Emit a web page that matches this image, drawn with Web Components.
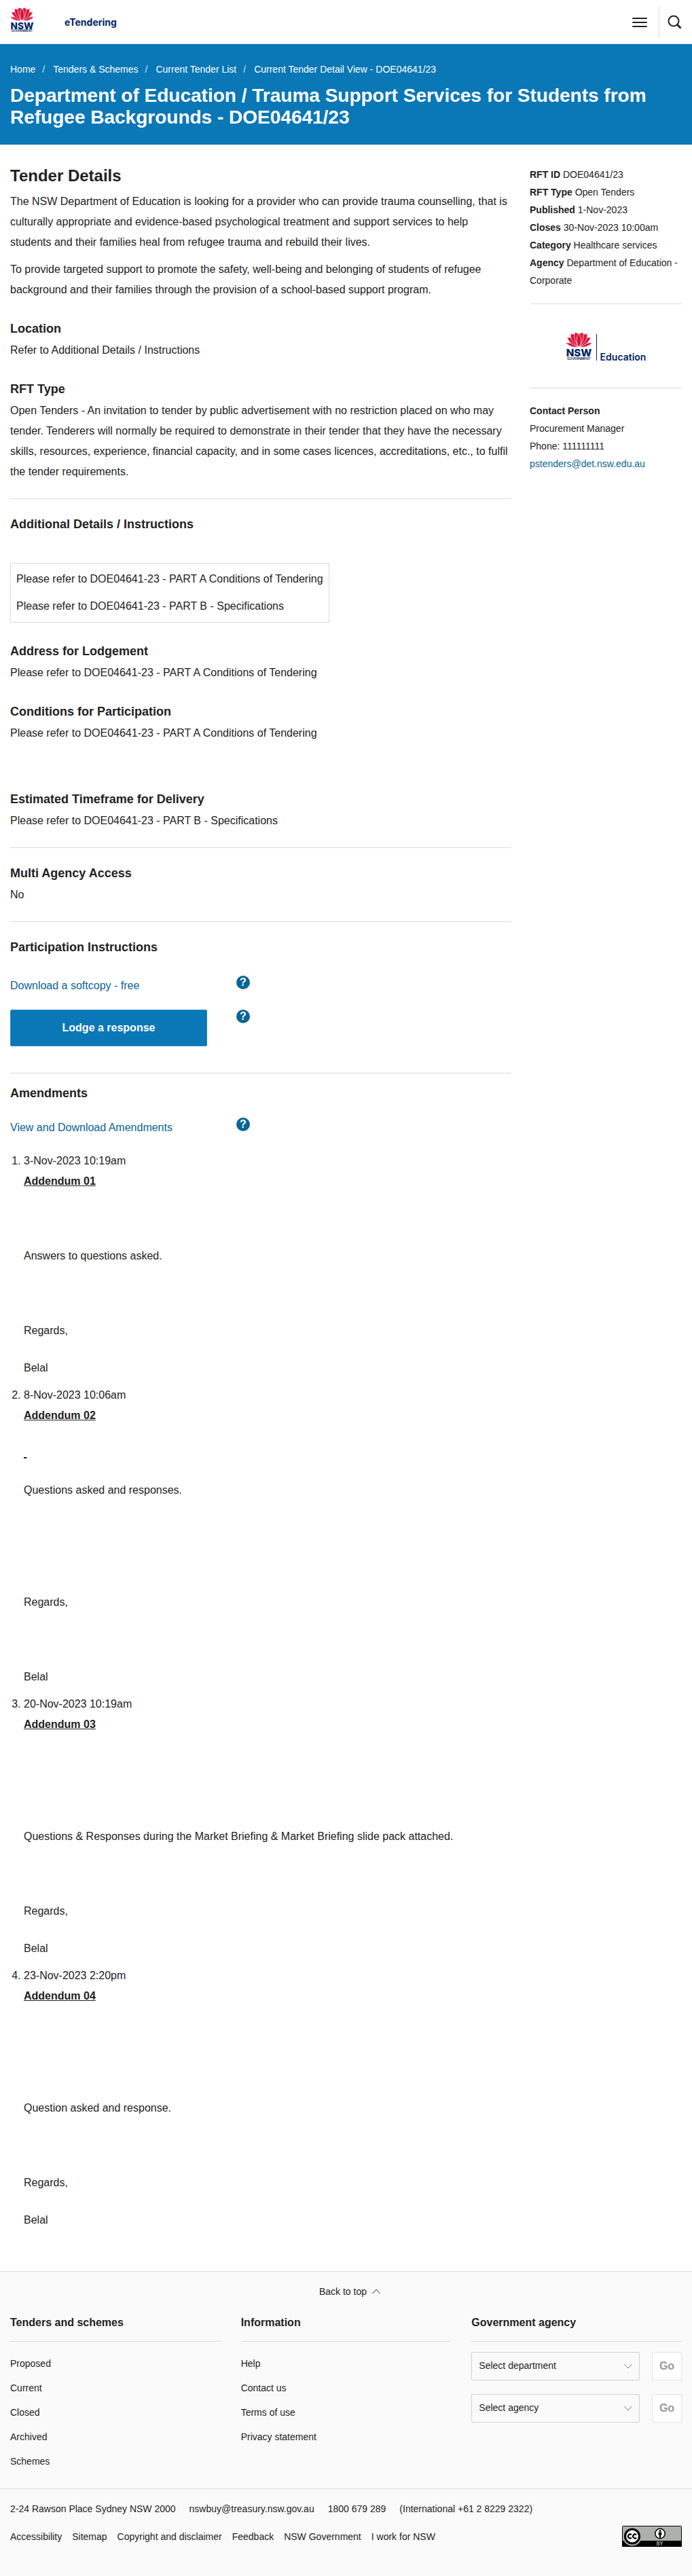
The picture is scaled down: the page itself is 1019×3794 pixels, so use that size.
<!DOCTYPE html>
<html lang="en">
<head>
<meta charset="utf-8">
<meta name="viewport" content="width=device-width, initial-scale=1">
<title>Current Tender Detail View - DOE04641/23</title>
<style>
  :root {
    --ink: #222;
    --link: #0a6496;
    --brand: #0a77b6;
    --line: #dbdbdb;
    --navy: #002664;
    --red: #d7153a;
  }
  body {
    margin: 0;
    background: #fff;
    color: var(--ink);
    font: 16px/30px "Liberation Sans", Arial, sans-serif;
  }
  main {
    display: grid;
    grid-template-columns: minmax(0, 1fr) 224px;
    gap: 28px;
    padding: 31px 15px 50px;
  }
  h2 { margin: 0 0 8px; font-size: 24px; line-height: 30px; }
  p { margin: 0 0 10px; }
  p:last-child, p:has(+ detail-block) { margin-bottom: 0; }
  a { color: var(--link); text-decoration: none; }
  hr { margin: 24px 0 25px; border: 0; border-top: 1px solid var(--line); }
  hr.wide { margin: 39px 0 17px; }
  detail-block { margin-top: 30px; }
  hr + detail-block { margin-top: 0; }
  detail-block.spaced { margin-top: 70px; }
  .boxed {
    width: max-content;
    max-width: 100%;
    box-sizing: border-box;
    margin-top: 45px;
    padding: 8px;
    border: 1px solid var(--line);
  }
  action-row { margin-top: 24px; }
  action-row.first { margin-top: 30px; }
  action-row + action-row { margin-top: 20px; }
</style>
</head>
<body>

<template id="t-waratah">
  <style>
    :host { display: block; }
    svg { display: block; width: 100%; height: 100%; }
    .petals { fill: var(--red); stroke: #fff; stroke-width: 6; }
    text { font-family: Inter, sans-serif; fill: var(--navy); text-anchor: middle; }
  </style>
  <svg viewBox="0 0 350 380" role="img" aria-label="NSW Government">
    <g class="petals">
      <path d="M160 208C95 212 40 190 0 150C55 142 120 165 160 208Z"/>
      <path d="M190 208C255 212 310 190 350 150C295 142 230 165 190 208Z"/>
      <path d="M160 204C95 180 35 140 18 72C38 82 48 82 62 76C110 95 148 140 160 204Z"/>
      <path d="M190 204C255 180 315 140 332 72C312 82 302 82 288 76C240 95 202 140 190 204Z"/>
      <path d="M168 202C100 160 55 100 66 22C84 38 96 38 112 28C140 70 165 130 168 202Z"/>
      <path d="M182 202C250 160 295 100 284 22C266 38 254 38 238 28C210 70 185 130 182 202Z"/>
      <path d="M172 202C122 140 100 66 126 4C138 22 150 24 162 14C172 60 176 130 172 202Z"/>
      <path d="M178 202C228 140 250 66 224 4C212 22 200 24 188 14C178 60 174 130 178 202Z"/>
      <path d="M175 204C132 160 136 70 175 22C214 70 218 160 175 204Z"/>
    </g>
    <text x="175" y="328" font-size="136" font-weight="800">NSW</text>
    <text x="175" y="374" font-size="44" font-weight="600">GOVERNMENT</text>
  </svg>
</template>

<template id="t-header">
  <style>
    :host {
      display: flex;
      justify-content: space-between;
      align-items: center;
      padding: 10px 15px 9px;
      border-bottom: 1px solid #d5e3ee;
    }
    .brand, .tools { display: flex; align-items: center; }
    .brand { gap: 45px; color: var(--navy); text-decoration: none; font: 700 14px/20px Inter, sans-serif; }
    nsw-waratah { width: 35px; height: 38px; align-self: flex-start; margin-bottom: 7px; }
    button { display: block; padding: 0; border: 0; background: none; cursor: pointer; }
    svg { display: block; fill: none; stroke: #222; }
    .rule { width: 1px; height: 45px; margin: 0 12px 0 17px; background: var(--line); }
  </style>
  <a class="brand" href="#home"><nsw-waratah></nsw-waratah><span>eTendering</span></a>
  <div class="tools">
    <button type="button" aria-label="Menu">
      <svg width="22" height="16" viewBox="0 0 22 16" stroke-width="2" stroke-linecap="round"><path d="M1 2h20M1 8h20M1 14h20"/></svg>
    </button>
    <span class="rule"></span>
    <button type="button" aria-label="Search">
      <svg width="21" height="21" viewBox="0 0 21 21" stroke-width="2"><circle cx="9" cy="9" r="7.5"/><path d="M13.5 13.5l6 6" stroke-width="3"/></svg>
    </button>
  </div>
</template>

<template id="t-hero">
  <style>
    :host { display: block; padding: 27px 15px 24px; background: var(--brand); color: #fff; }
    ol { display: flex; flex-wrap: wrap; margin: 0 0 13px; padding: 0; list-style: none; font-size: 14px; line-height: 20px; }
    li + li::before { content: "/"; margin: 0 12px 0 10px; color: #d3e4f0; }
    a { color: #fff; text-decoration: none; }
    h1 { margin: 0; font-size: 28px; line-height: 32px; }
  </style>
  <nav aria-label="Breadcrumb">
    <ol>
      <li><a href="#home">Home</a></li>
      <li><a href="#tenders">Tenders &amp; Schemes</a></li>
      <li><a href="#list">Current Tender List</a></li>
      <li>Current Tender Detail View - DOE04641/23</li>
    </ol>
  </nav>
  <h1><slot></slot></h1>
</template>

<template id="t-block">
  <style>
    :host { display: block; }
    h3 { margin: 0 0 5px; font-size: 18px; line-height: 24px; }
  </style>
  <section><h3></h3><slot></slot></section>
</template>

<template id="t-action">
  <style>
    :host { display: grid; grid-template-columns: 290px auto; justify-content: start; align-items: start; gap: 43px; }
    .help { display: block; padding: 0; border: 0; border-radius: 50%; width: 20px; height: 20px; background: var(--link); color: #fff; font: 700 16px/20px "Liberation Sans", Arial, sans-serif; text-align: center; cursor: pointer; }
    ::slotted(button) { display: block; width: 100%; padding: 11px; border: 1px solid #2a89bf; border-radius: 2px; background: var(--brand); color: #fff; font: inherit; font-weight: 700; cursor: pointer; }
  </style>
  <div><slot></slot></div>
  <button class="help" type="button" aria-label="Help">?</button>
</template>

<template id="t-amendments">
  <style>
    :host { display: block; margin-top: 19px; }
    ol { margin: 0; padding: 0 0 0 20px; }
    li { margin-bottom: 10px; }
    strong { display: block; text-decoration: underline; }
    p { min-height: 30px; margin: 25px 0 0; }
    u { font-weight: 700; text-decoration-thickness: 2px; }
  </style>
  <ol>
    <li>3-Nov-2023 10:19am<strong>Addendum 01</strong><p></p><p>Answers to questions asked.</p><p></p><p>Regards,</p><p>Belal</p></li>
    <li>8-Nov-2023 10:06am<strong>Addendum 02</strong><p><u>&nbsp;</u></p><p>Questions asked and responses.</p><p></p><p></p><p>Regards,</p><p></p><p>Belal</p></li>
    <li>20-Nov-2023 10:19am<strong>Addendum 03</strong><p></p><p></p><p>Questions &amp; Responses during the Market Briefing &amp; Market Briefing slide pack attached.</p><p></p><p>Regards,</p><p>Belal</p></li>
    <li>23-Nov-2023 2:20pm<strong>Addendum 04</strong><p></p><p></p><p>Question asked and response.</p><p></p><p>Regards,</p><p>Belal</p></li>
  </ol>
</template>

<template id="t-aside">
  <style>
    :host { display: block; font-size: 14px; line-height: 26px; }
    dl, dt, dd, p { margin: 0; }
    dt, dd { display: inline; }
    dt, .name { font-weight: 700; }
    a { color: var(--link); text-decoration: none; }
    .logo { display: flex; justify-content: center; align-items: flex-end; gap: 6px; margin: 21px 0 20px; padding: 40px 0; border: 1px solid var(--line); border-width: 1px 0; }
    nsw-waratah { width: 39px; height: 43px; }
    .logo span { padding: 29px 0 0 5px; border-left: 1px solid var(--navy); color: var(--navy); font: 600 14px/10px Inter, sans-serif; }
  </style>
  <aside>
    <dl>
      <div><dt>RFT ID</dt> <dd>DOE04641/23</dd></div>
      <div><dt>RFT Type</dt> <dd>Open Tenders</dd></div>
      <div><dt>Published</dt> <dd>1-Nov-2023</dd></div>
      <div><dt>Closes</dt> <dd>30-Nov-2023 10:00am</dd></div>
      <div><dt>Category</dt> <dd>Healthcare services</dd></div>
      <div><dt>Agency</dt> <dd>Department of Education - Corporate</dd></div>
    </dl>
    <div class="logo"><nsw-waratah></nsw-waratah><span>Education</span></div>
    <p class="name">Contact Person</p>
    <p>Procurement Manager</p>
    <p>Phone: 111111111</p>
    <p><a href="mailto:pstenders@det.nsw.edu.au">pstenders@det.nsw.edu.au</a></p>
  </aside>
</template>

<template id="t-picker">
  <style>
    :host { display: grid; grid-template-columns: minmax(0, 1fr) 44px; gap: 18px; }
    .field { display: grid; align-items: center; }
    .field > * { grid-area: 1 / 1; }
    select, button { box-sizing: border-box; height: 42px; border: 1px solid #d2d2d2; border-radius: 2px; }
    select { appearance: none; width: 100%; padding: 0 30px 2px 10px; background: transparent; color: var(--ink); font: 14px/20px "Liberation Sans", Arial, sans-serif; }
    svg { justify-self: end; margin-right: 11px; fill: none; stroke: #777; pointer-events: none; }
    button { padding: 0; border-color: #e4e4e4; background: #fff; color: #999; font: 700 16px/20px "Liberation Sans", Arial, sans-serif; }
  </style>
  <div class="field">
    <select><option></option></select>
    <svg width="12" height="8" viewBox="0 0 12 8"><path d="M.5 1L6 7l5.500-6"/></svg>
  </div>
  <button type="button" disabled>Go</button>
</template>

<template id="t-footer">
  <style>
    :host { display: block; border-top: 1px solid var(--line); background: #fafafa; font-size: 14px; line-height: 26px; }
    a { color: inherit; text-decoration: none; }
    ul { margin: 0; padding: 0; list-style: none; }
    .top { display: flex; justify-content: center; padding: 19px 0 24px; line-height: 20px; }
    .top a { display: flex; align-items: center; gap: 8px; padding-left: 11px; }
    .columns { display: grid; grid-template-columns: repeat(3, minmax(0, 1fr)); gap: 30px; padding: 0 15px 27px; }
    h3 { margin: 0; padding-bottom: 15px; border-bottom: 1px solid var(--line); font-size: 16px; line-height: 24px; }
    .columns ul { display: grid; gap: 10px; margin-top: 19px; }
    agency-picker { margin-top: 15px; }
    agency-picker + agency-picker { margin-top: 20px; }
    .legal { padding: 19px 15px 43px; border-top: 1px solid var(--line); line-height: 20px; }
    .legal ul { display: flex; flex-wrap: wrap; gap: 15px; }
    .legal .contact { gap: 20px; }
    .row { display: flex; justify-content: space-between; align-items: center; margin-top: 15px; }
    .row svg { display: block; }
  </style>
  <footer>
    <div class="top"><a href="#top">Back to top
      <svg width="12" height="8" viewBox="0 0 12 8" fill="none" stroke="#222"><path d="M.5 7L6 1l5.500 6"/></svg></a></div>
    <div class="columns">
      <section>
        <h3>Tenders and schemes</h3>
        <ul><li><a href="#p">Proposed</a></li><li><a href="#c">Current</a></li><li><a href="#cl">Closed</a></li><li><a href="#a">Archived</a></li><li><a href="#s">Schemes</a></li></ul>
      </section>
      <section>
        <h3>Information</h3>
        <ul><li><a href="#h">Help</a></li><li><a href="#cu">Contact us</a></li><li><a href="#t">Terms of use</a></li><li><a href="#ps">Privacy statement</a></li></ul>
      </section>
      <section>
        <h3>Government agency</h3>
        <agency-picker label="Select department"></agency-picker>
        <agency-picker label="Select agency"></agency-picker>
      </section>
    </div>
    <div class="legal">
      <ul class="contact"><li>2-24 Rawson Place Sydney NSW 2000</li><li><a href="mailto:nswbuy@treasury.nsw.gov.au">nswbuy@treasury.nsw.gov.au</a></li><li>1800 679 289</li><li>(International +61 2 8229 2322)</li></ul>
      <div class="row">
        <ul><li><a href="#ac">Accessibility</a></li><li><a href="#sm">Sitemap</a></li><li><a href="#cd">Copyright and disclaimer</a></li><li><a href="#fb">Feedback</a></li><li><a href="#ng">NSW Government</a></li><li><a href="#iw">I work for NSW</a></li></ul>
        <a href="#licence" aria-label="Creative Commons Attribution">
          <svg width="88" height="31" viewBox="0 0 88 31">
            <rect x=".5" y=".5" width="87" height="30" rx="1" fill="#abb1aa" stroke="#000"/>
            <path d="M0 22h88v8a1 1 0 0 1-1 1H1a1 1 0 0 1-1-1z"/>
            <circle cx="15" cy="15.500" r="14" fill="#abb1aa"/>
            <circle cx="15" cy="15.500" r="10.500" fill="#fff" stroke="#000" stroke-width="3"/>
            <g fill="none" stroke="#000" stroke-width="2.200"><path d="M13.800 13.400A2.900 2.900 0 1 0 13.800 17.600M21 13.400A2.900 2.900 0 1 0 21 17.600"/></g>
            <circle cx="56" cy="11.500" r="7.200" fill="#fff" stroke="#000" stroke-width="1.500"/>
            <circle cx="56" cy="7.500" r="1.500"/><path d="M53.700 9.500h4.600v4.200h-1.200v4h-2.200v-4h-1.200z"/>
            <text x="55.500" y="29" fill="#fff" font-family="Inter, sans-serif" font-size="7" text-anchor="middle">BY</text>
          </svg>
        </a>
      </div>
    </div>
  </footer>
</template>

<site-header id="top"></site-header>
<page-hero>Department of Education / Trauma Support Services for Students from Refugee Backgrounds - DOE04641/23</page-hero>

<main>
  <article>
    <h2>Tender Details</h2>
    <p>The NSW Department of Education is looking for a provider who can provide trauma counselling, that is culturally appropriate and evidence-based psychological treatment and support services to help students and their families heal from refugee trauma and rebuild their lives.</p>
    <p>To provide targeted support to promote the safety, well-being and belonging of students of refugee background and their families through the provision of a school-based support program.</p>
    <detail-block heading="Location"><p>Refer to Additional Details / Instructions</p></detail-block>
    <detail-block heading="RFT Type"><p>Open Tenders - An invitation to tender by public advertisement with no restriction placed on who may tender. Tenderers will normally be required to demonstrate in their tender that they have the necessary skills, resources, experience, financial capacity, and in some cases licences, accreditations, etc., to fulfil the tender requirements.</p></detail-block>
    <hr>
    <detail-block heading="Additional Details / Instructions">
      <div class="boxed">
        <p>Please refer to DOE04641-23 - PART A Conditions of Tendering</p>
        <p>Please refer to DOE04641-23 - PART B - Specifications</p>
      </div>
    </detail-block>
    <detail-block heading="Address for Lodgement"><p>Please refer to DOE04641-23 - PART A Conditions of Tendering</p></detail-block>
    <detail-block heading="Conditions for Participation"><p>Please refer to DOE04641-23 - PART A Conditions of Tendering</p></detail-block>
    <detail-block class="spaced" heading="Estimated Timeframe for Delivery"><p>Please refer to DOE04641-23 - PART B - Specifications</p></detail-block>
    <hr>
    <detail-block heading="Multi Agency Access"><p>No</p></detail-block>
    <hr>
    <detail-block heading="Participation Instructions">
      <action-row class="first"><a href="#softcopy">Download a softcopy - free</a></action-row>
      <action-row><button type="button">Lodge a response</button></action-row>
    </detail-block>
    <hr class="wide">
    <detail-block heading="Amendments">
      <action-row><a href="#amendments">View and Download Amendments</a></action-row>
      <amendment-list></amendment-list>
    </detail-block>
  </article>
  <tender-summary></tender-summary>
</main>

<site-footer></site-footer>

<script>
  class TemplateElement extends HTMLElement {
    constructor() {
      super();
      const source = document.getElementById(this.constructor.template);
      this.attachShadow({ mode: "open" }).append(source.content.cloneNode(true));
    }
  }
  class NswWaratah extends TemplateElement { static template = "t-waratah"; }
  class SiteHeader extends TemplateElement { static template = "t-header"; }
  class PageHero extends TemplateElement { static template = "t-hero"; }
  class ActionRow extends TemplateElement { static template = "t-action"; }
  class AmendmentList extends TemplateElement { static template = "t-amendments"; }
  class TenderSummary extends TemplateElement { static template = "t-aside"; }
  class SiteFooter extends TemplateElement { static template = "t-footer"; }
  class DetailBlock extends TemplateElement {
    static template = "t-block";
    connectedCallback() {
      this.shadowRoot.querySelector("h3").textContent = this.getAttribute("heading");
    }
  }
  class AgencyPicker extends TemplateElement {
    static template = "t-picker";
    connectedCallback() {
      const label = this.getAttribute("label");
      this.shadowRoot.querySelector("option").textContent = label;
      this.shadowRoot.querySelector("select").setAttribute("aria-label", label);
    }
  }
  customElements.define("nsw-waratah", NswWaratah);
  customElements.define("site-header", SiteHeader);
  customElements.define("page-hero", PageHero);
  customElements.define("detail-block", DetailBlock);
  customElements.define("action-row", ActionRow);
  customElements.define("amendment-list", AmendmentList);
  customElements.define("tender-summary", TenderSummary);
  customElements.define("agency-picker", AgencyPicker);
  customElements.define("site-footer", SiteFooter);
</script>
</body>
</html>
